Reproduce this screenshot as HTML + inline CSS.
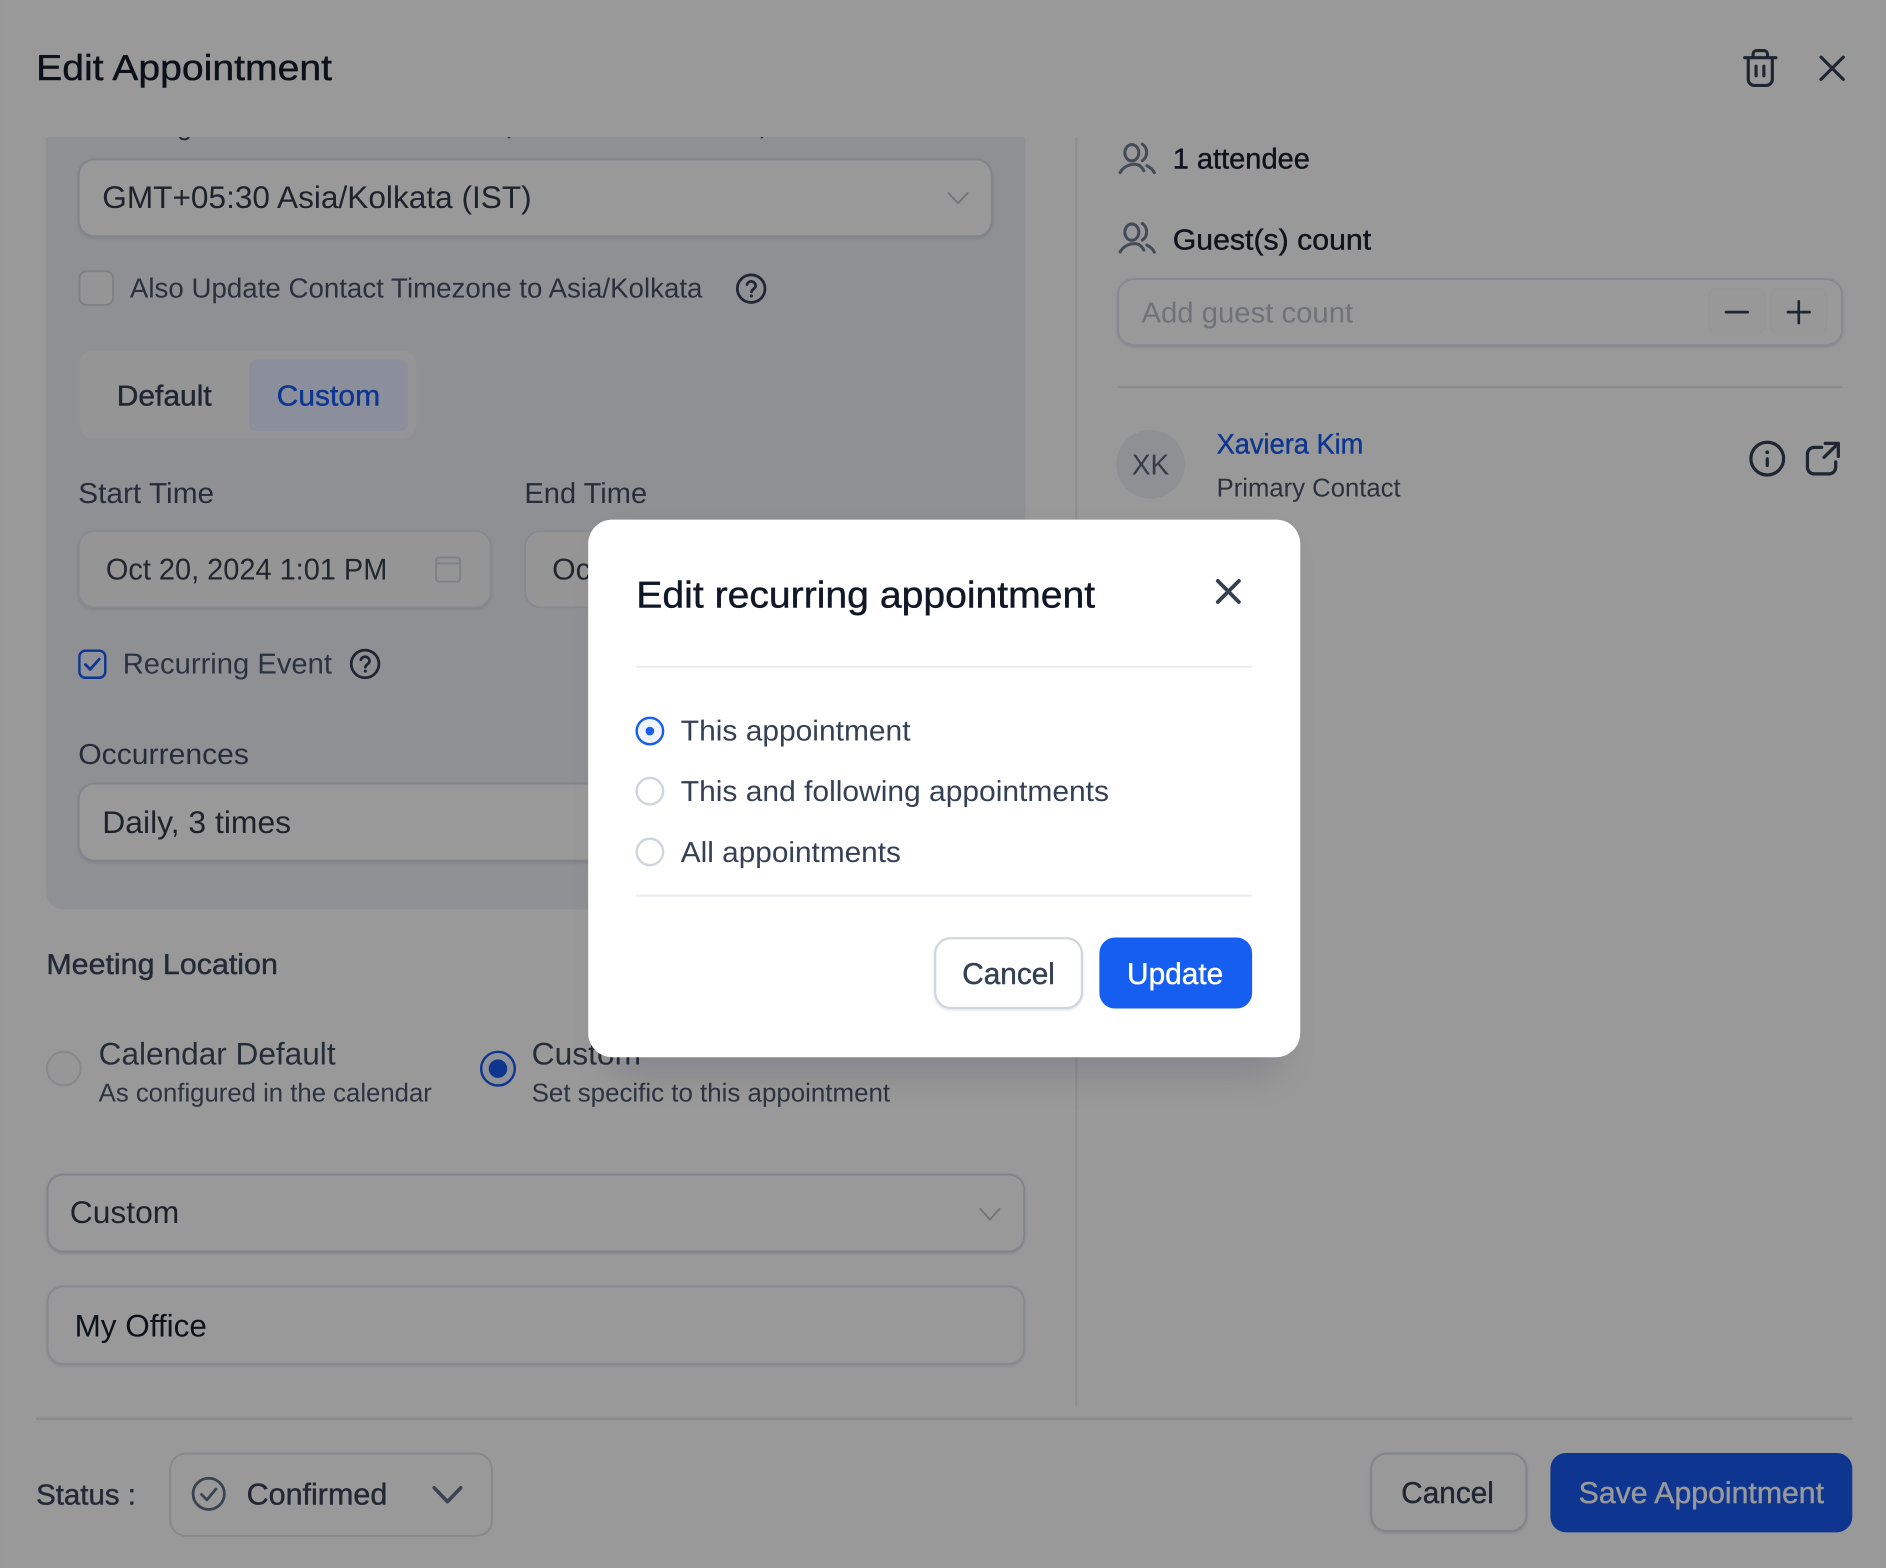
<!DOCTYPE html>
<html lang="en"><head><meta charset="utf-8"><title>Edit Appointment</title>
<style>
html,body{margin:0;padding:0;background:#999;width:1886px;height:1568px;overflow:hidden}
svg{display:block}
text{font-family:"Liberation Sans",Arial,sans-serif;text-rendering:geometricPrecision}
.m{stroke-width:.35;stroke:currentColor}
.ic{fill:none;stroke-linecap:round;stroke-linejoin:round}
</style></head><body>
<svg xmlns="http://www.w3.org/2000/svg" width="1886" height="1568" viewBox="0 0 1568 1303.66">
<defs>
<filter id="sh" x="-5%" y="-20%" width="110%" height="150%"><feDropShadow dx="0" dy="1" stdDeviation="1" flood-color="#101828" flood-opacity=".13"/></filter>
<filter id="ms" x="-20%" y="-20%" width="140%" height="140%"><feGaussianBlur stdDeviation="14"/></filter>
<clipPath id="pc"><rect x="38" y="114" width="815" height="20"/></clipPath>
</defs>
<rect width="1568" height="1304" fill="#999"/>

<!-- header -->
<text x="30" y="66.5" font-size="30" fill="#0c1018" class="m" color="#0c1018" textLength="246" lengthAdjust="spacingAndGlyphs">Edit Appointment</text>
<g class="ic" stroke="#1f2632" stroke-width="2.6">
<path d="M1450.5 48H1476.5M1457.5 48V45a3 3 0 0 1 3-3h6a3 3 0 0 1 3 3v3M1453.5 48V66a5 5 0 0 0 5 5h10a5 5 0 0 0 5-5V48M1460 55V63M1466.5 55V63"/>
<path d="M1514 47.5L1532.5 66M1532.5 47.5L1514 66"/>
</g>

<!-- left panel -->
<path d="M38.5 114H852.5V742a14 14 0 0 1-14 14H52.5a14 14 0 0 1-14-14Z" fill="#8f9093"/>
<g clip-path="url(#pc)"><text x="147" y="112" font-size="23" fill="#1f2632">g</text><text x="417" y="110" font-size="23" fill="#1f2632">(</text><text x="632" y="110" font-size="23" fill="#1f2632">)</text></g>

<rect x="65.5" y="132.5" width="759" height="64" rx="13" fill="#999" stroke="#82848c" stroke-width="1.6" filter="url(#sh)"/>
<text x="85" y="173" font-size="26" fill="#1e222b" textLength="357" lengthAdjust="spacingAndGlyphs">GMT+05:30 Asia/Kolkata (IST)</text>
<path class="ic" d="M788.5 160.5L796.5 169L804.5 160.5" stroke="#72747a" stroke-width="1.5"/>

<rect x="66" y="225.5" width="28" height="28" rx="6" fill="#959596" stroke="#7e8086" stroke-width="1.6"/>
<text x="108" y="247.5" font-size="23" fill="#2a303c" textLength="476" lengthAdjust="spacingAndGlyphs">Also Update Contact Timezone to Asia/Kolkata</text>
<g class="ic" stroke="#1f2632" stroke-width="2.3"><circle cx="624.5" cy="240" r="11.5"/><path d="M621 236.5a3.7 3.7 0 0 1 7.2 1.2c0 2.4-3.4 2.8-3.4 5"/></g><circle cx="624.7" cy="246" r="1.3" fill="#1f2632"/>

<rect x="66" y="292" width="280" height="72.5" rx="11" fill="#959596"/>
<rect x="207" y="299" width="132" height="59.5" rx="6" fill="#8b8f9c"/>
<text x="97" y="337" font-size="24" fill="#1f2632" class="m" color="#1f2632" textLength="79" lengthAdjust="spacingAndGlyphs">Default</text>
<text x="230" y="337" font-size="24" fill="#0e3690" class="m" color="#0e3690" textLength="86" lengthAdjust="spacingAndGlyphs">Custom</text>

<text x="65" y="418" font-size="24" fill="#262c38" textLength="113" lengthAdjust="spacingAndGlyphs">Start Time</text>
<text x="436" y="418" font-size="24" fill="#262c38" textLength="102" lengthAdjust="spacingAndGlyphs">End Time</text>

<rect x="65.5" y="441.5" width="342.5" height="63.5" rx="13" fill="#959596" stroke="#878990" stroke-width="1.5" filter="url(#sh)"/>
<text x="88" y="482" font-size="25" fill="#22262e" textLength="234" lengthAdjust="spacingAndGlyphs">Oct 20, 2024 1:01 PM</text>
<g class="ic" stroke="#7f8185" stroke-width="1.6"><rect x="362.5" y="463.5" width="20" height="20" rx="2.5"/><path d="M362.5 468.5H382.5"/></g>
<rect x="436.5" y="441.5" width="200" height="63.5" rx="13" fill="#959596" stroke="#878990" stroke-width="1.5"/>
<text x="459" y="482" font-size="25" fill="#22262e" textLength="60" lengthAdjust="spacingAndGlyphs">Oct 2</text>

<rect x="66" y="541" width="21.5" height="22.5" rx="5" fill="#90939a" stroke="#0e3690" stroke-width="2"/>
<path class="ic" d="M71 552.5L75 556.5L82.5 548" stroke="#0e3690" stroke-width="2.3"/>
<text x="102" y="560" font-size="24" fill="#2b3240" textLength="174" lengthAdjust="spacingAndGlyphs">Recurring Event</text>
<g class="ic" stroke="#1f2632" stroke-width="2.3"><circle cx="303.5" cy="552" r="11.5"/><path d="M300 548.5a3.7 3.7 0 0 1 7.2 1.2c0 2.4-3.4 2.8-3.4 5"/></g><circle cx="303.7" cy="558" r="1.3" fill="#1f2632"/>

<text x="65" y="635" font-size="24" fill="#262c38" textLength="142" lengthAdjust="spacingAndGlyphs">Occurrences</text>
<rect x="65.5" y="651.5" width="759" height="64" rx="13" fill="#999" stroke="#82848c" stroke-width="1.6" filter="url(#sh)"/>
<text x="85" y="692.5" font-size="26" fill="#1e222b" textLength="157" lengthAdjust="spacingAndGlyphs">Daily, 3 times</text>

<text x="38.5" y="810" font-size="24" fill="#232a37" class="m" color="#232a37" textLength="192.5" lengthAdjust="spacingAndGlyphs">Meeting Location</text>

<circle cx="53" cy="888.5" r="14" fill="#979797" stroke="#86888b" stroke-width="1.6"/>
<text x="82" y="885" font-size="26" fill="#262c38" textLength="197" lengthAdjust="spacingAndGlyphs">Calendar Default</text>
<text x="82" y="916" font-size="21.5" fill="#2b3240" textLength="277" lengthAdjust="spacingAndGlyphs">As configured in the calendar</text>
<circle cx="414" cy="888.5" r="14" fill="#8f9298" stroke="#0e3690" stroke-width="2"/><circle cx="414" cy="888.5" r="7.7" fill="#0e3690"/>
<text x="442" y="885" font-size="26" fill="#262c38" textLength="91" lengthAdjust="spacingAndGlyphs">Custom</text>
<text x="442" y="916" font-size="21.5" fill="#2b3240" textLength="298" lengthAdjust="spacingAndGlyphs">Set specific to this appointment</text>

<rect x="39.5" y="976.5" width="812" height="64" rx="13" fill="#999" stroke="#82848c" stroke-width="1.6" filter="url(#sh)"/>
<text x="58" y="1017" font-size="26" fill="#1e222b" textLength="91" lengthAdjust="spacingAndGlyphs">Custom</text>
<path class="ic" d="M815 1005L823 1014L831 1005" stroke="#72747a" stroke-width="1.5"/>

<rect x="39.5" y="1069.5" width="812" height="64.5" rx="13" fill="#999" stroke="#878990" stroke-width="1.6" filter="url(#sh)"/>
<text x="62" y="1111" font-size="26" fill="#0d111a" textLength="110" lengthAdjust="spacingAndGlyphs">My Office</text>

<!-- divider -->
<rect x="894" y="114" width="1.5" height="1056" fill="#8e8e8e"/>

<!-- right column -->
<g class="ic" stroke="#434a58" stroke-width="2.5">
<ellipse cx="941" cy="127" rx="5.8" ry="6.8"/><path d="M949.7 119.8C954.5 123 954.5 130.5 949.7 133.6M931.2 143.6C934 138.5 939 136.6 943.6 136.6C947 136.6 949.5 139 951 142M953.5 137.8C956 139 958.5 141 959.7 143.6"/>
<ellipse cx="941" cy="193" rx="5.8" ry="6.8"/><path d="M949.7 185.8C954.5 189 954.5 196.5 949.7 199.6M931.2 209.6C934 204.5 939 202.6 943.6 202.6C947 202.6 949.5 205 951 208M953.5 203.8C956 205 958.5 207 959.7 209.6"/>
</g>
<text x="975" y="140" font-size="24" fill="#0f131c" class="m" color="#0f131c" textLength="114" lengthAdjust="spacingAndGlyphs">1 attendee</text>
<text x="975" y="207.5" font-size="24" fill="#0f131c" class="m" color="#0f131c" textLength="165" lengthAdjust="spacingAndGlyphs">Guest(s) count</text>

<rect x="929.5" y="232" width="602" height="55" rx="13" fill="#999" stroke="#878990" stroke-width="1.6" filter="url(#sh)"/>
<text x="949" y="268" font-size="24" fill="#707277" textLength="176" lengthAdjust="spacingAndGlyphs">Add guest count</text>
<rect x="1421" y="240" width="46" height="37" rx="6" fill="#989898" stroke="#959595" stroke-width="1"/>
<rect x="1472.5" y="240" width="46" height="37" rx="6" fill="#989898" stroke="#959595" stroke-width="1"/>
<g class="ic" stroke="#1f2632" stroke-width="2.2"><path d="M1435 259.5H1453M1486.5 259.5H1504.5M1495.5 250.5V268.5"/></g>

<rect x="929" y="321" width="603" height="2" fill="#8c8c8c"/>

<circle cx="956.5" cy="386" r="28.5" fill="#8e9093"/>
<text x="941" y="394.5" font-size="24" fill="#363c48" textLength="31" lengthAdjust="spacingAndGlyphs">XK</text>
<text x="1011.5" y="377" font-size="23.5" fill="#0e3690" class="m" color="#0e3690" textLength="122" lengthAdjust="spacingAndGlyphs">Xaviera Kim</text>
<text x="1011.5" y="413" font-size="21.5" fill="#2a303c" textLength="153" lengthAdjust="spacingAndGlyphs">Primary Contact</text>
<g class="ic" stroke="#1f2632" stroke-width="2.7">
<circle cx="1469.3" cy="381.3" r="13.6"/><path d="M1469.3 381.5V387"/>
<path d="M1514.5 372H1508.2a5.5 5.5 0 0 0-5.5 5.5V388.5a5.5 5.5 0 0 0 5.5 5.5H1520.7a5.5 5.5 0 0 0 5.5-5.5V384M1516.5 380.2L1528.4 368.6M1517.5 368.6H1528.4V379.5"/>
</g><circle cx="1469.3" cy="376" r="1.6" fill="#1f2632"/>

<!-- footer -->
<rect x="30" y="1178.5" width="1510" height="2.2" fill="#8a8a8a"/>
<text x="30" y="1251" font-size="24" fill="#232a37" class="m" color="#232a37" textLength="83" lengthAdjust="spacingAndGlyphs">Status :</text>
<rect x="141.5" y="1208.5" width="267.5" height="68.5" rx="13" fill="none" stroke="#87888b" stroke-width="1.6"/>
<g class="ic" stroke="#3b4250" stroke-width="2.3"><circle cx="173.5" cy="1242" r="13"/><path d="M167.5 1242.5L172 1247L179.5 1238"/></g>
<text x="205" y="1251" font-size="25" fill="#212734" class="m" color="#212734" textLength="117" lengthAdjust="spacingAndGlyphs">Confirmed</text>
<path class="ic" d="M361 1237L372 1248.5L383 1237" stroke="#3b4252" stroke-width="3"/>
<rect x="1140" y="1208.5" width="129" height="64.5" rx="13" fill="#999" stroke="#82848a" stroke-width="1.7" filter="url(#sh)"/>
<text x="1165" y="1249.5" font-size="25" fill="#1f2632" class="m" color="#1f2632" textLength="77" lengthAdjust="spacingAndGlyphs">Cancel</text>
<rect x="1289" y="1208" width="251" height="66" rx="13" fill="#0e3690"/>
<text x="1312.5" y="1249.5" font-size="25" fill="#999" class="m" color="#999" textLength="204" lengthAdjust="spacingAndGlyphs">Save Appointment</text>

<!-- modal -->
<rect x="505" y="450" width="560" height="445" rx="20" fill="#101828" fill-opacity=".13" filter="url(#ms)"/>
<rect x="489" y="432" width="592" height="447" rx="20" fill="#fff"/>
<text x="529" y="505" font-size="31" fill="#101828" class="m" color="#101828" textLength="381.5" lengthAdjust="spacingAndGlyphs">Edit recurring appointment</text>
<path class="ic" d="M1012.5 483L1030 500.5M1030 483L1012.5 500.5" stroke="#344054" stroke-width="3.2"/>
<rect x="529" y="553.5" width="512" height="1.8" fill="#eaecf0"/>
<circle cx="540.3" cy="607.8" r="11" fill="#eff4ff" stroke="#155eef" stroke-width="2"/><circle cx="540.3" cy="607.8" r="3.6" fill="#155eef"/>
<circle cx="540.3" cy="657.8" r="11" fill="#fff" stroke="#d0d5dd" stroke-width="2"/>
<circle cx="540.3" cy="708.3" r="11" fill="#fff" stroke="#d0d5dd" stroke-width="2"/>
<text x="566" y="615.5" font-size="24" fill="#344054" textLength="191" lengthAdjust="spacingAndGlyphs">This appointment</text>
<text x="566" y="666" font-size="24" fill="#344054" textLength="356" lengthAdjust="spacingAndGlyphs">This and following appointments</text>
<text x="566" y="716.5" font-size="24" fill="#344054" textLength="183" lengthAdjust="spacingAndGlyphs">All appointments</text>
<rect x="529" y="743.8" width="512" height="1.8" fill="#eaecf0"/>
<rect x="777.5" y="780" width="122" height="58" rx="13" fill="#fff" stroke="#d0d5dd" stroke-width="1.8" filter="url(#sh)"/>
<text x="800" y="818" font-size="25" fill="#344054" class="m" color="#344054" textLength="77" lengthAdjust="spacingAndGlyphs">Cancel</text>
<rect x="914" y="779.5" width="127" height="59" rx="13" fill="#155eef"/>
<text x="937" y="818" font-size="25" fill="#fff" class="m" color="#fff" textLength="80" lengthAdjust="spacingAndGlyphs">Update</text>
</svg>
</body></html>
